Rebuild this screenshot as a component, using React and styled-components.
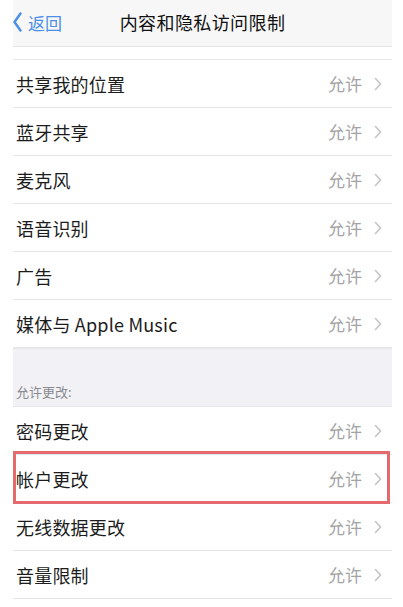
import React from "react";
import styled, { createGlobalStyle } from "styled-components";

const Global = createGlobalStyle`
  html, body { margin: 0; padding: 0; background: #ffffff; }
  body { font-family: "Noto Sans CJK SC", "Noto Sans", sans-serif; }
`;

const Screen = styled.div`
  margin: 0 11px 0 13px;
  width: 379px;
  background: #ffffff;
`;

const NavBar = styled.div`
  height: 46px;
  background: #f7f7f8;
  border-bottom: 1px solid #e4e4e6;
  display: grid;
  grid-template-columns: 1fr auto 1fr;
  align-items: center;
`;

const Back = styled.div`
  display: flex;
  align-items: center;
  gap: 6px;
  color: #4b8fe6;
  font-size: 17px;
  margin-top: -2px;
`;

const Title = styled.div`
  font-size: 18px;
  font-weight: 400;
  color: #111;
  margin-top: -3px;
  letter-spacing: 0.4px;
`;

const Spacer = styled.div`
  height: 12px;
  border-bottom: 1px solid #e8e8ea;
`;

const Group = styled.div`
  display: flex;
  flex-direction: column;
`;

const Row = styled.div`
  position: relative;
  height: 47px;
  display: flex;
  align-items: center;
  padding: 0 10px 0 3px;
  border-bottom: 1px solid #e6e6e8;
  ${(p) =>
    p.$marked &&
    `
    &::after {
      content: "";
      position: absolute;
      left: 0;
      right: 2px;
      top: -4px;
      bottom: -2px;
      border: 3px solid #e46a6d;
      pointer-events: none;
    }
  `}
`;

const Label = styled.div`
  flex: 1;
  font-size: 18px;
  color: #1c1c1c;
  letter-spacing: 0.2px;
`;

const Value = styled.div`
  font-size: 17px;
  color: #a3a3a3;
  margin-right: 12px;
`;

const SectionHeader = styled.div`
  height: 59px;
  background: #f2f2f6;
  border-bottom: 1px solid #e6e6e8;
  display: flex;
  align-items: flex-end;
  padding: 0 0 5px 3px;
  box-sizing: border-box;
  font-size: 13px;
  color: #8a8a8e;
  border-top: 1px solid #e6e6e8;
`;

const BackChevron = () => (
  <svg width="9" height="20" viewBox="0 0 9 20">
    <path d="M7.5 1.5 L1.5 10 L7.5 18.5" fill="none" stroke="#4b8fe6" strokeWidth="2.4" strokeLinecap="round" strokeLinejoin="round" />
  </svg>
);

const Chevron = () => (
  <svg width="8" height="14" viewBox="0 0 8 14">
    <path d="M1.5 1.5 L6.5 7 L1.5 12.5" fill="none" stroke="#c4c4c8" strokeWidth="1.6" strokeLinecap="round" strokeLinejoin="round" />
  </svg>
);

const SettingRow = ({ label, marked }) => (
  <Row $marked={marked}>
    <Label>{label}</Label>
    <Value>允许</Value>
    <Chevron />
  </Row>
);

const group1 = ["共享我的位置", "蓝牙共享", "麦克风", "语音识别", "广告", "媒体与 Apple Music"];
const group2 = ["密码更改", "帐户更改", "无线数据更改", "音量限制"];

export default function App() {
  return (
    <>
      <Global />
      <Screen>
        <NavBar>
          <Back>
            <BackChevron />
            <span>返回</span>
          </Back>
          <Title>内容和隐私访问限制</Title>
          <div />
        </NavBar>
        <Spacer />
        <Group>
          {group1.map((l) => (
            <SettingRow key={l} label={l} />
          ))}
        </Group>
        <SectionHeader>允许更改:</SectionHeader>
        <Group>
          {group2.map((l) => (
            <SettingRow key={l} label={l} marked={l === "帐户更改"} />
          ))}
        </Group>
      </Screen>
    </>
  );
}
